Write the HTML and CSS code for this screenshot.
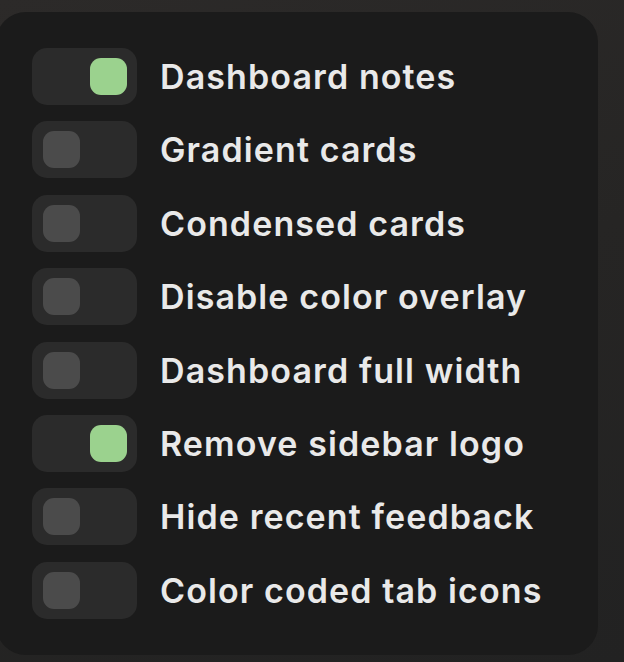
FILE: index.html
```html
<!DOCTYPE html>
<html>
<head>
<meta charset="utf-8">
<link rel="stylesheet" href="styles.css">
</head>
<body>
<div class="panel">
  <div class="row"><span class="toggle on"><span class="knob"></span></span><span class="label">Dashboard notes</span></div>
  <div class="row"><span class="toggle"><span class="knob"></span></span><span class="label">Gradient cards</span></div>
  <div class="row"><span class="toggle"><span class="knob"></span></span><span class="label">Condensed cards</span></div>
  <div class="row"><span class="toggle"><span class="knob"></span></span><span class="label">Disable color overlay</span></div>
  <div class="row"><span class="toggle"><span class="knob"></span></span><span class="label">Dashboard full width</span></div>
  <div class="row"><span class="toggle on"><span class="knob"></span></span><span class="label">Remove sidebar logo</span></div>
  <div class="row"><span class="toggle"><span class="knob"></span></span><span class="label">Hide recent feedback</span></div>
  <div class="row"><span class="toggle"><span class="knob"></span></span><span class="label">Color coded tab icons</span></div>
</div>
</body>
</html>
```
FILE: styles.css
```css
html, body {
  margin: 0;
  padding: 0;
  width: 624px;
  height: 662px;
  overflow: hidden;
}
body {
  background: linear-gradient(160deg, #2c2a29 0%, #262524 50%, #222222 100%);
  font-family: Inter, "Open Sans", sans-serif;
}
.panel {
  box-sizing: border-box;
  margin: 12px 0 0 -4px;
  width: 602px;
  height: 643px;
  background: #1b1b1b;
  border-radius: 30px;
  padding: 36px 0 0 36px;
  display: flex;
  flex-direction: column;
  gap: 16.4px;
}
.row {
  display: flex;
  align-items: center;
  gap: 23px;
  height: 57px;
}
.toggle {
  box-sizing: border-box;
  width: 105px;
  height: 57px;
  border-radius: 15px;
  background: #2b2b2b;
  display: flex;
  align-items: center;
  padding: 0 11px;
  flex: none;
}
.knob {
  width: 37px;
  height: 37px;
  border-radius: 11px;
  background: #4b4b4b;
}
.toggle.on {
  justify-content: flex-end;
  padding: 0 10px;
}
.toggle.on .knob {
  background: #9bd28e;
}
.label {
  color: #e9e9e9;
  font-size: 34px;
  font-weight: 600;
  letter-spacing: 1.1px;
  line-height: 1;
  margin-top: 1px;
}
```
